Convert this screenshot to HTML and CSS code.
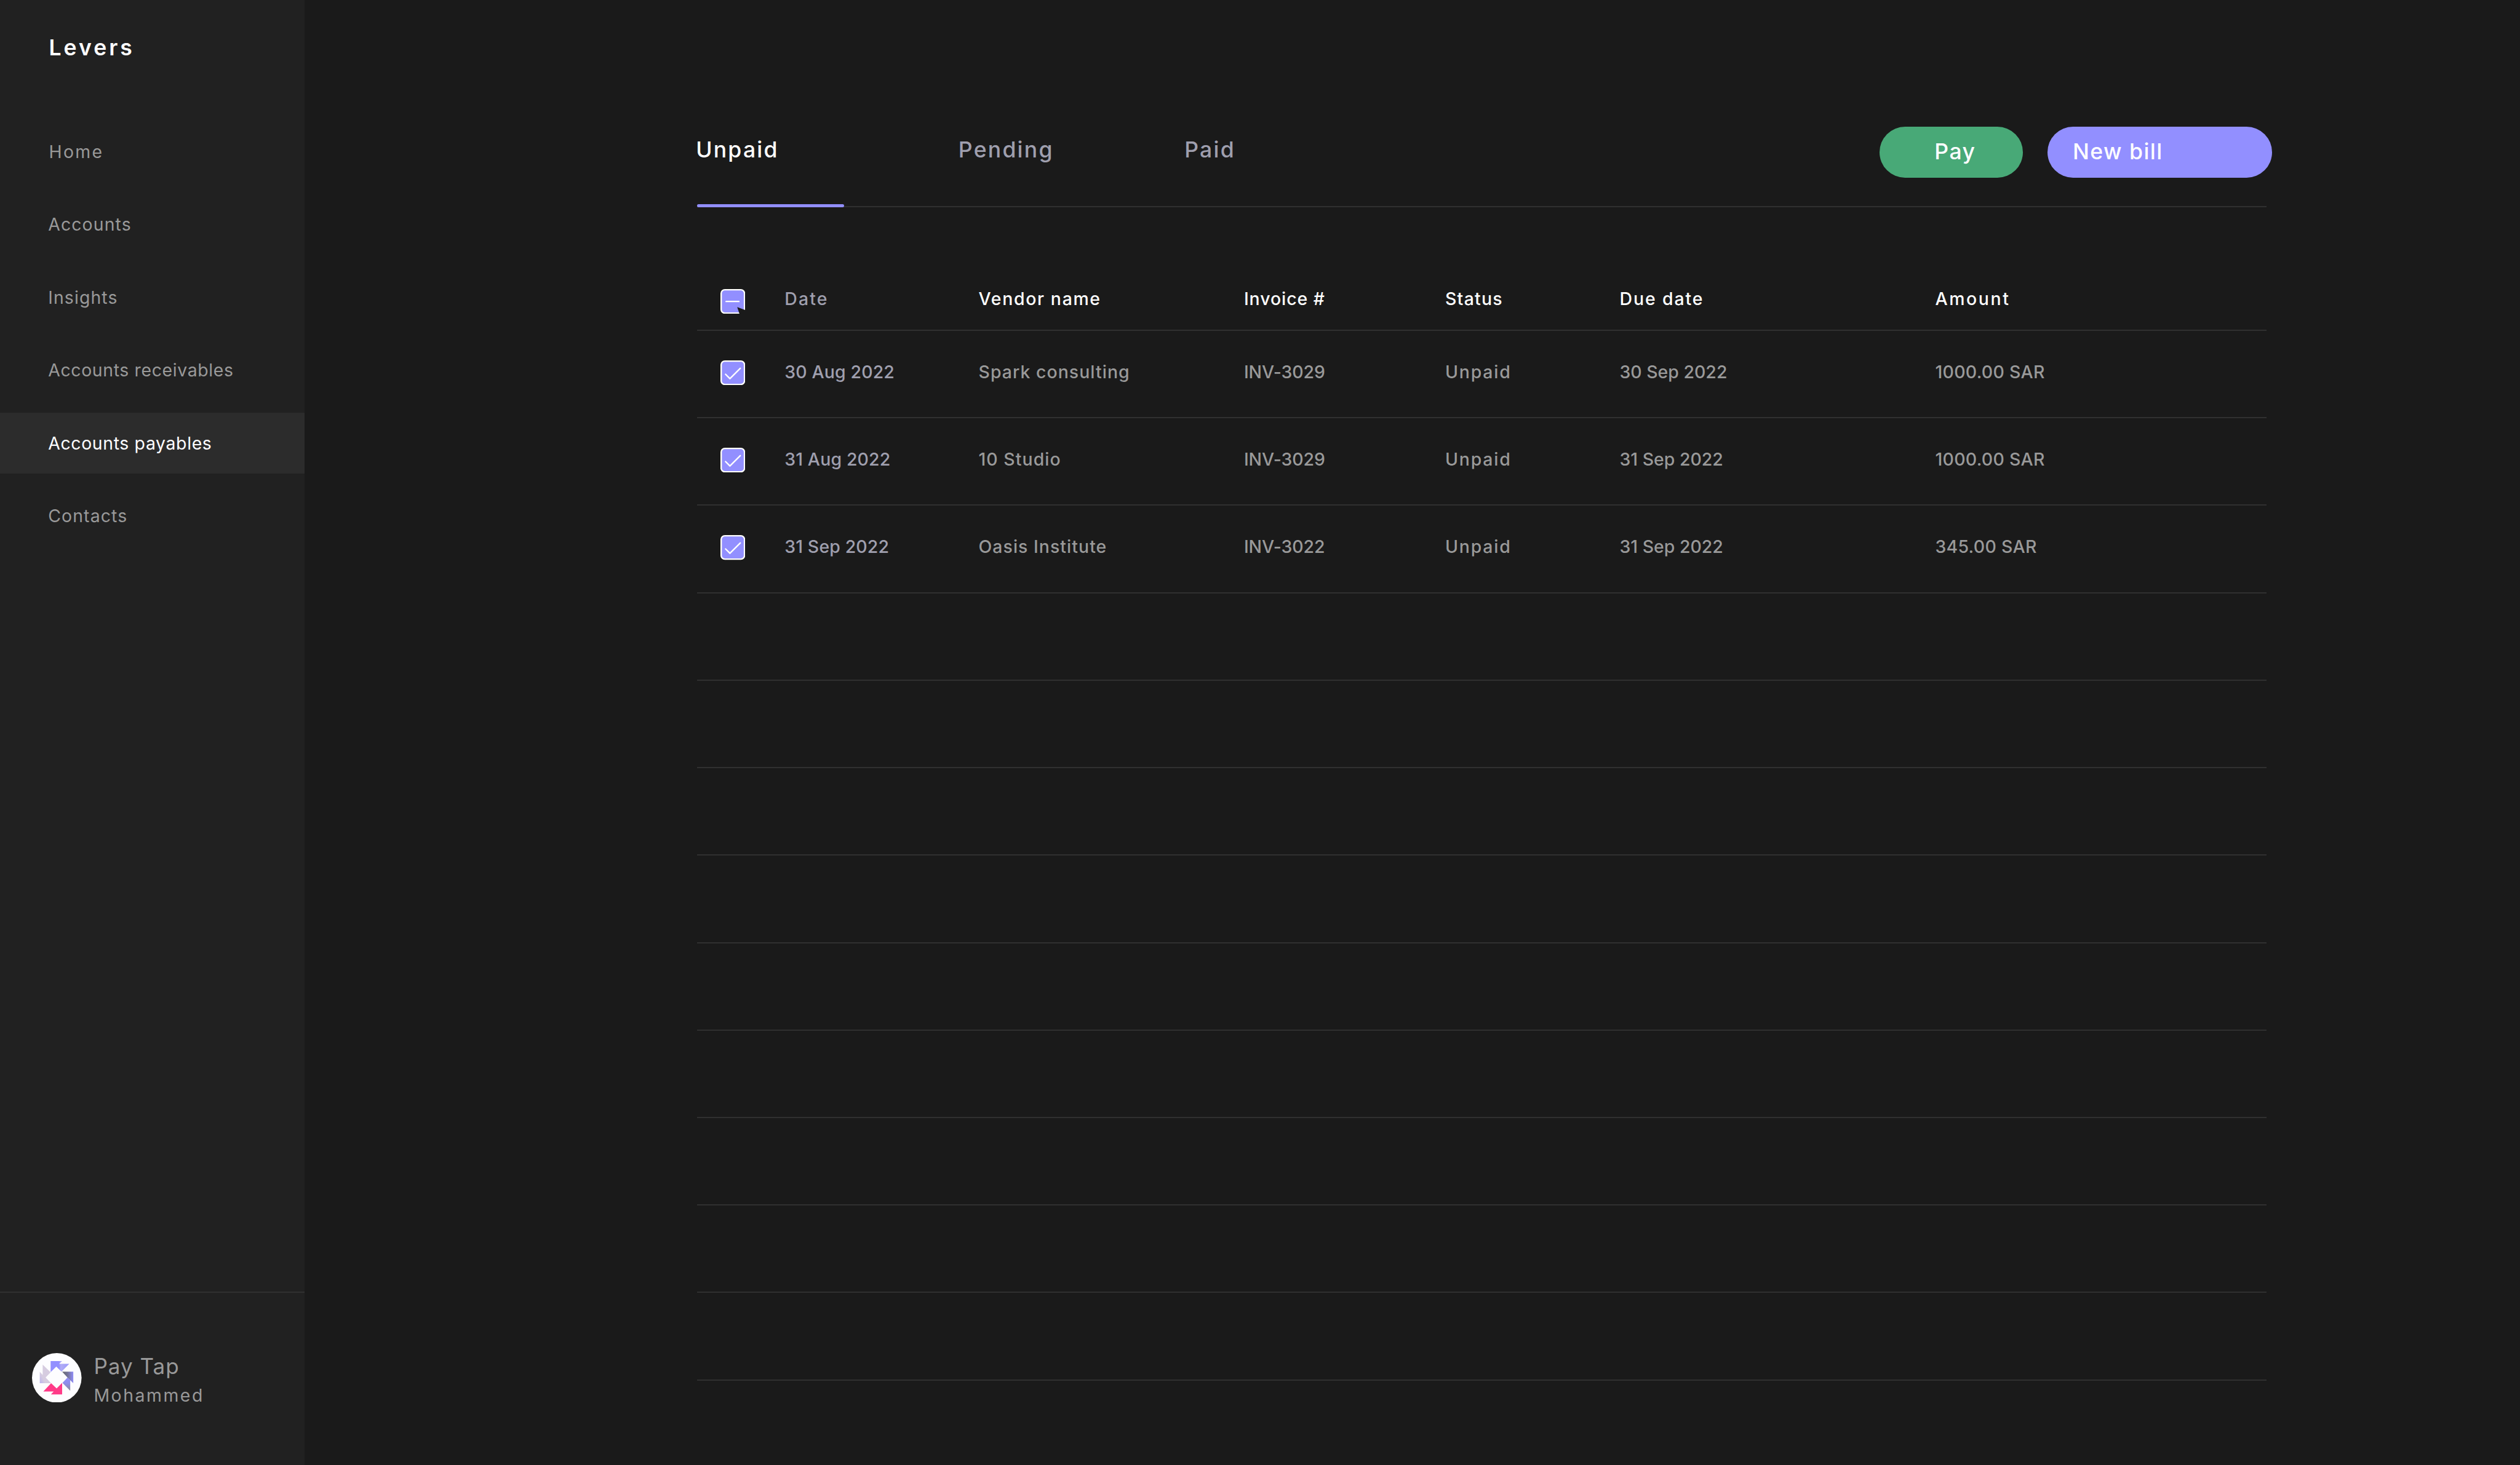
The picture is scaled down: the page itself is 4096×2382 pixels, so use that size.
FILE: index.html
```html
<!DOCTYPE html>
<html lang="en">
<head>
    <meta charset="UTF-8">
    <meta name="viewport" content="width=device-width, initial-scale=1.0">
    <title>Levers - Accounts payables</title>
    <link rel="stylesheet" href="styles.css">
</head>
<body>
    <!-- Sidebar -->
    <aside class="sidebar">
        <div class="brand">Levers</div>
        <nav class="menu">
            <a class="menu-item home">Home</a>
            <a class="menu-item">Accounts</a>
            <a class="menu-item">Insights</a>
            <a class="menu-item long">Accounts receivables</a>
            <a class="menu-item long active">Accounts payables</a>
            <a class="menu-item">Contacts</a>
        </nav>
        <div class="profile">
            <svg class="avatar" viewBox="48 42 306 306">
                <defs>
                    <linearGradient id="top" x1="0" y1="0" x2="1" y2="0">
                        <stop offset="0.45" stop-color="#928fff"/>
                        <stop offset="0.55" stop-color="#b1adf6"/>
                        <stop offset="1" stop-color="#9b98fb"/>
                    </linearGradient>
                    <linearGradient id="rightUp" x1="0" y1="0" x2="1" y2="0">
                        <stop offset="0" stop-color="#66666c"/>
                        <stop offset="0.5" stop-color="#74749a"/>
                        <stop offset="1" stop-color="#908df8"/>
                    </linearGradient>
                    <linearGradient id="rightDown" x1="0" y1="0" x2="0" y2="1">
                        <stop offset="0" stop-color="#928fff"/>
                        <stop offset="0.45" stop-color="#8f8ce8"/>
                        <stop offset="1" stop-color="#8b8b95"/>
                    </linearGradient>
                    <linearGradient id="left" x1="0" y1="1" x2="0.6" y2="0.5">
                        <stop offset="0" stop-color="#b9b3ee"/>
                        <stop offset="0.5" stop-color="#d6cce0"/>
                    </linearGradient>
                </defs>
                <circle cx="201" cy="195" r="153" fill="#fdfdff"/>
                <path fill="url(#top)" d="M163 91h71l-18 17h62l-48 49-32-31-35 34z"/>
                <path fill="url(#rightDown)" d="M267 193l17 16v66l-48-49z"/>
                <path fill="url(#rightUp)" d="M234 157h69v71l-36-35z"/>
                <path fill="#ff3a88" d="M118 279l48-51 34 32 34-34v71h-69l17-18z"/>
                <path fill="url(#left)" d="M96 158l18 19v-64l49 48-31 32 34 35H96z"/>
            </svg>
            <div class="profile-text">
                <div class="company">Pay Tap</div>
                <div class="user">Mohammed</div>
            </div>
        </div>
    </aside>

    <!-- Bills -->
    <main class="content">
        <header class="toolbar">
            <div class="tabs">
                <a class="tab active">Unpaid</a>
                <a class="tab">Pending</a>
                <a class="tab">Paid</a>
            </div>
            <div class="actions">
                <button type="button" class="btn btn-pay">Pay</button>
                <button type="button" class="btn btn-new">New bill</button>
            </div>
        </header>

        <div class="table">
            <div class="row row-head">
                <svg class="check" viewBox="0 0 17 17">
                    <rect class="box" x="0.5" y="0.5" width="16" height="16" rx="2.5"/>
                    <path class="mark" d="M3.9 8.5h8.7"/>
                    <path class="notch" d="M11.5 12.3l6 2.3v2.9h-4.3z"/>
                </svg>
                <span class="date head-date">Date</span>
                <span class="vendor head">Vendor name</span>
                <span class="invoice head">Invoice #</span>
                <span class="status head">Status</span>
                <span class="due head">Due date</span>
                <span class="amount head">Amount</span>
            </div>
            <div class="row">
                <svg class="check" viewBox="0 0 17 17">
                    <rect class="box" x="0.5" y="0.5" width="16" height="16" rx="2.5"/>
                    <path class="mark" d="M3.5 9.5l3 3 7.1-7.1"/>
                </svg>
                <span class="date">30 Aug 2022</span>
                <span class="vendor">Spark consulting</span>
                <span class="invoice">INV-3029</span>
                <span class="status">Unpaid</span>
                <span class="due">30 Sep 2022</span>
                <span class="amount">1000.00 SAR</span>
            </div>
            <div class="row">
                <svg class="check" viewBox="0 0 17 17">
                    <rect class="box" x="0.5" y="0.5" width="16" height="16" rx="2.5"/>
                    <path class="mark" d="M3.5 9.5l3 3 7.1-7.1"/>
                </svg>
                <span class="date">31 Aug 2022</span>
                <span class="vendor">10 Studio</span>
                <span class="invoice">INV-3029</span>
                <span class="status">Unpaid</span>
                <span class="due">31 Sep 2022</span>
                <span class="amount">1000.00 SAR</span>
            </div>
            <div class="row">
                <svg class="check" viewBox="0 0 17 17">
                    <rect class="box" x="0.5" y="0.5" width="16" height="16" rx="2.5"/>
                    <path class="mark" d="M3.5 9.5l3 3 7.1-7.1"/>
                </svg>
                <span class="date">31 Sep 2022</span>
                <span class="vendor">Oasis Institute</span>
                <span class="invoice">INV-3022</span>
                <span class="status">Unpaid</span>
                <span class="due">31 Sep 2022</span>
                <span class="amount">345.00 SAR</span>
            </div>
            <!-- empty rows -->
            <div class="row"></div>
            <div class="row"></div>
            <div class="row"></div>
            <div class="row"></div>
            <div class="row"></div>
            <div class="row"></div>
            <div class="row"></div>
            <div class="row"></div>
            <div class="row"></div>
        </div>
    </main>
</body>
</html>
```
FILE: styles.css
```css
/* 1rem = 1 unit of a 1728 wide layout */
html {
    font-size: calc(100vw / 1728);
}

* {
    box-sizing: border-box;
}

body {
    margin: 0;
    height: 100vh;
    display: flex;
    overflow: hidden;
    background: #1a1a1a;
    color: #999;
    font-family: Inter, "Liberation Sans", sans-serif;
    font-size: 12rem;
    line-height: 20rem;
    white-space: nowrap;
}

/* Sidebar */
.sidebar {
    display: flex;
    flex-direction: column;
    width: 209rem;
    height: 100%;
    background: #212121;
}

.brand {
    height: 83rem;
    padding: 22.8rem 0 0 33.5rem;
    color: #fdfdff;
    font-size: 15rem;
    font-weight: 600;
    letter-spacing: 1.7rem;
}

.menu {
    display: flex;
    flex-direction: column;
    gap: 8rem;
}

.menu-item {
    display: flex;
    align-items: center;
    height: 42rem;
    padding-left: 33rem;
    letter-spacing: 0.46rem;
}

.menu-item.home {
    padding-left: 33.5rem;
    letter-spacing: 1rem;
}

.menu-item.long {
    letter-spacing: 0.26rem;
}

.menu-item.active {
    background: #2c2c2c;
    color: #fdfdff;
}

.profile {
    display: flex;
    gap: 8.3rem;
    height: 118.9rem;
    margin-top: auto;
    padding: 41.2rem 0 0 22rem;
    border-top: 1rem solid #303030;
}

.avatar {
    width: 34rem;
    height: 34rem;
}

.company {
    font-size: 14.8rem;
    line-height: 18rem;
    letter-spacing: 0.42rem;
}

.user {
    line-height: 22rem;
    letter-spacing: 1.06rem;
}

/* Toolbar */
.content {
    width: 1076rem;
    margin-left: 269rem;
    padding-top: 87rem;
}

.toolbar {
    display: flex;
    justify-content: space-between;
    height: 55rem;
    border-bottom: 1rem solid #303030;
}

.tabs {
    display: grid;
    grid-template-columns: 180rem 155rem auto;
}

.tab {
    position: relative;
    padding-top: 6rem;
    color: #9f9fae;
    font-size: 15rem;
    font-weight: 450;
    letter-spacing: 0.95rem;
    text-indent: -0.8rem;
}

.tab.active {
    color: #fff;
}

.tab.active::after {
    content: "";
    position: absolute;
    left: 0;
    bottom: -1rem;
    width: 101rem;
    height: 2rem;
    border-radius: 1rem;
    background: #928fff;
}

.actions {
    display: flex;
    gap: 17rem;
    margin-right: -4rem;
}

.btn {
    height: 35rem;
    padding: 0 0 1rem;
    border: none;
    border-radius: 17.5rem;
    color: #fdfdff;
    font-family: inherit;
    font-size: 15rem;
    font-weight: 450;
    line-height: 20rem;
    letter-spacing: 0.62rem;
    text-align: left;
    cursor: pointer;
}

.btn-pay {
    width: 98rem;
    padding-left: 37.5rem;
    background: #48a977;
}

.btn-new {
    width: 154rem;
    padding-left: 17.3rem;
    background: #928fff;
}

/* Table */
.row {
    display: grid;
    grid-template-columns: 44rem 133rem 182rem 138rem 119.6rem 216.4rem auto;
    align-items: start;
    height: 60rem;
    padding: 18rem 0 0 16rem;
    border-bottom: 1rem solid #303030;
    font-weight: 450;
}

.row-head {
    height: 85rem;
    padding-top: 53rem;
}

.check {
    width: 17rem;
    height: 17rem;
    margin-top: 2.2rem;
    overflow: hidden;
}

.row-head .check {
    margin-top: 3.2rem;
}

.check .box {
    fill: #928fff;
    stroke: #fff;
}

.check .mark {
    fill: none;
    stroke: #fff;
    stroke-linecap: round;
    stroke-linejoin: round;
}

.check .notch {
    fill: #1a1a1a;
}

.date {
    color: #9f9fae;
    letter-spacing: 0.06rem;
}

.head-date {
    letter-spacing: 0.9rem;
}

.vendor {
    letter-spacing: 0.44rem;
}

.invoice {
    letter-spacing: -0.02rem;
}

.status {
    letter-spacing: 0.75rem;
}

.due {
    letter-spacing: 0;
}

.amount {
    letter-spacing: 0.12rem;
}

.head {
    color: #fff;
}

.vendor.head {
    letter-spacing: 0.7rem;
}

.invoice.head {
    letter-spacing: 0.4rem;
}

.status.head {
    letter-spacing: 0.52rem;
}

.due.head {
    letter-spacing: 0.8rem;
}

.amount.head {
    letter-spacing: 1.1rem;
}
```
